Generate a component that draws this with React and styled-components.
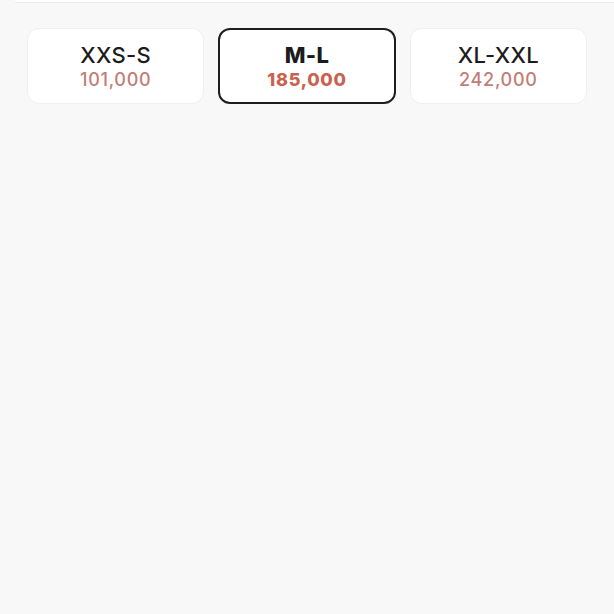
import React, {useState} from "react";
import styled, {createGlobalStyle} from "styled-components";

const GlobalStyle = createGlobalStyle`
  html, body {
    margin: 0;
    padding: 0;
    background: #f8f8f8;
    font-family: Inter, "Liberation Sans", Arial, sans-serif;
  }
`

const Page = styled.div`
  min-height: 614px;
  background: #f8f8f8;
`

const TopEdge = styled.div`
  height: 2px;
  margin-left: 15px;
  background: #fdfdfd;
  border-bottom: 1px solid #ececec;
`

const Sizes = styled.div`
  display: grid;
  grid-template-columns: repeat(3, 1fr);
  gap: 14px;
  padding: 25px 27px 0 27px;
`

const SizeCard = styled.button`
  height: 76px;
  box-sizing: border-box;
  display: flex;
  flex-direction: column;
  align-items: center;
  justify-content: center;
  gap: 3px;
  background: #fff;
  border-radius: 12px;
  border: ${p => p.$active ? "2px solid #1e1e1e" : "1px solid #efefef"};
  padding: 0;
  cursor: pointer;
  font-family: inherit;
`

const Label = styled.span`
  font-size: 22px;
  line-height: 24px;
  letter-spacing: 0.3px;
  font-weight: ${p => p.$active ? 800 : 500};
  color: #1c1c1c;
`

const Price = styled.span`
  font-size: 18px;
  line-height: 20px;
  letter-spacing: 0.7px;
  font-weight: ${p => p.$active ? 800 : 500};
  color: ${p => p.$active ? "#c9624f" : "#c27d76"};
`

const sizes = [
	{id: "xxs-s", label: "XXS-S", price: "101,000"},
	{id: "m-l", label: "M-L", price: "185,000"},
	{id: "xl-xxl", label: "XL-XXL", price: "242,000"},
]

const App = () => {
	const [selected, setSelected] = useState("m-l")

	return (
		<Page>
			<GlobalStyle/>
			<TopEdge/>
			<Sizes>
				{sizes.map(el => {
					const active = el.id === selected
					return (
						<SizeCard key={el.id} $active={active} onClick={() => setSelected(el.id)}>
							<Label $active={active}>{el.label}</Label>
							<Price $active={active}>{el.price}</Price>
						</SizeCard>
					)
				})}
			</Sizes>
		</Page>
	)
}

export default App
